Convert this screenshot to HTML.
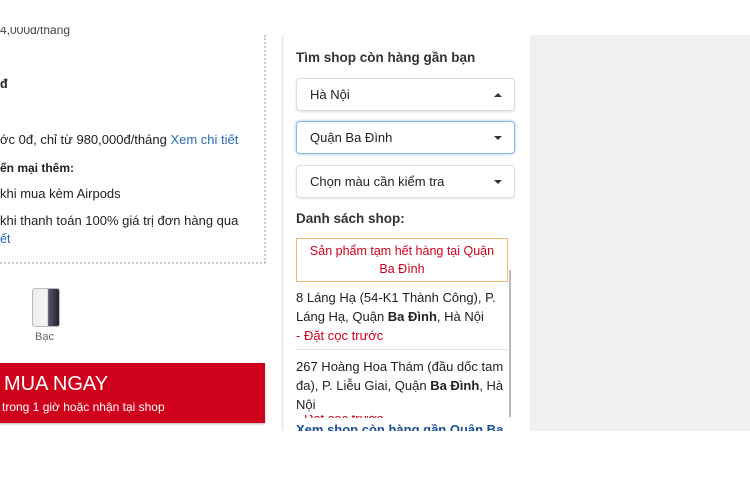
<!DOCTYPE html>
<html><head><meta charset="utf-8"><style>
*{margin:0;padding:0;box-sizing:border-box}
body{width:750px;height:500px;background:#fff;font-family:"Liberation Sans",Arial,sans-serif;position:relative;overflow:hidden;color:#222;font-size:12.5px}
.a{position:absolute;white-space:nowrap}
.blue{color:#2a6bb8}
.sel{position:absolute;left:296px;width:219px;height:33px;border:1px solid #ddd;border-radius:4px;box-shadow:0 1px 2px rgba(0,0,0,.12);padding-left:13px;line-height:31px;font-size:13px}
.sel .c{position:absolute;right:12px;top:14px;width:0;height:0;border-left:4px solid transparent;border-right:4px solid transparent;border-top:4px solid #333}
.sel .u{border-top:none;border-bottom:4px solid #333}
</style></head><body>
<div class="a" style="left:0;top:27px;height:10px;overflow:hidden;font-size:12px;color:#444"><div style="margin-top:-4px">4,000đ/tháng</div></div>
<div class="a" style="left:0;top:77px;font-weight:bold">đ</div>
<div class="a" style="left:0;top:132px;font-size:13px">ớc 0đ, chỉ từ 980,000đ/tháng <span class="blue">Xem chi tiết</span></div>
<div class="a" style="left:0;top:161px;font-weight:bold;font-size:12px">ến mại thêm:</div>
<div class="a" style="left:0;top:186px;font-size:13px">khi mua kèm Airpods</div>
<div class="a" style="left:0;top:213px;font-size:13px">khi thanh toán 100% giá trị đơn hàng qua</div>
<div class="a blue" style="left:0;top:232px">ết</div>
<div class="a" style="left:264px;top:35px;height:228px;border-left:2px dotted #ccc"></div>
<div class="a" style="left:0;top:262px;width:266px;border-top:2px dotted #ccc"></div>
<div class="a" style="left:32px;top:288px;width:28px;height:39px;border-radius:3px;background:linear-gradient(90deg,#eee 0,#f4f4f4 55%,#556 60%,#223 100%);border:1px solid #bbb"></div>
<div class="a" style="left:35px;top:331px;font-size:11px;color:#666">Bạc</div>
<div class="a" style="left:0;top:363px;width:265px;height:60px;background:#d0021b;box-shadow:0 1px 2px rgba(0,0,0,.3)"></div>
<div class="a" style="left:4px;top:373px;color:#fff;font-size:20px">MUA NGAY</div>
<div class="a" style="left:2px;top:400px;color:#fff;font-size:12px">trong 1 giờ hoặc nhận tại shop</div>
<div class="a" style="left:281px;top:35px;width:3px;height:396px;background:#f0f0f0"></div>
<div class="a" style="left:530px;top:35px;width:220px;height:396px;background:#f0f0f0"></div>
<div class="a" style="left:296px;top:50px;font-weight:bold;font-size:13.5px;color:#333">Tìm shop còn hàng gần bạn</div>
<div class="sel" style="top:78px">Hà Nội<span class="c u"></span></div>
<div class="sel" style="top:121px;border-color:#8ab4e8;box-shadow:0 0 3px #9cc0ee">Quận Ba Đình<span class="c"></span></div>
<div class="sel" style="top:165px">Chọn màu cần kiểm tra<span class="c"></span></div>
<div class="a" style="left:296px;top:211px;font-weight:bold;font-size:13.5px;color:#333">Danh sách shop:</div>
<div class="a" style="left:509px;top:270px;width:2px;height:147px;background:#bbb"></div>
<div class="a" style="left:296px;top:238px;width:212px;height:44px;border:1px solid #f5b870;background:#fff;color:#d0021b;text-align:center;line-height:18px;padding:3px 0 0;font-size:12.5px">Sản phẩm tạm hết hàng tại Quận<br>Ba Đình</div>
<div class="a" style="left:296px;top:288px;line-height:19px;font-size:13px">8 Láng Hạ (54-K1 Thành Công), P.<br>Láng Hạ, Quận <b>Ba Đình</b>, Hà Nội<br><span style="color:#d0021b">- Đặt cọc trước</span></div>
<div class="a" style="left:296px;top:349px;width:212px;border-top:1px solid #e4e4e4"></div>
<div class="a" style="left:296px;top:357px;line-height:19px;font-size:13px">267 Hoàng Hoa Thám (đầu dốc tam<br>đa), P. Liễu Giai, Quận <b>Ba Đình</b>, Hà<br>Nội</div>
<div class="a" style="left:296px;top:415px;height:3px;overflow:hidden;color:#d0021b;line-height:19px;font-size:13px"><div style="margin-top:-6px">- Đặt cọc trước</div></div>
<div class="a" style="left:296px;top:422px;height:9px;overflow:hidden;color:#1a4f95;font-weight:bold;font-size:13px">Xem shop còn hàng gần Quận Ba</div>
</body></html>
